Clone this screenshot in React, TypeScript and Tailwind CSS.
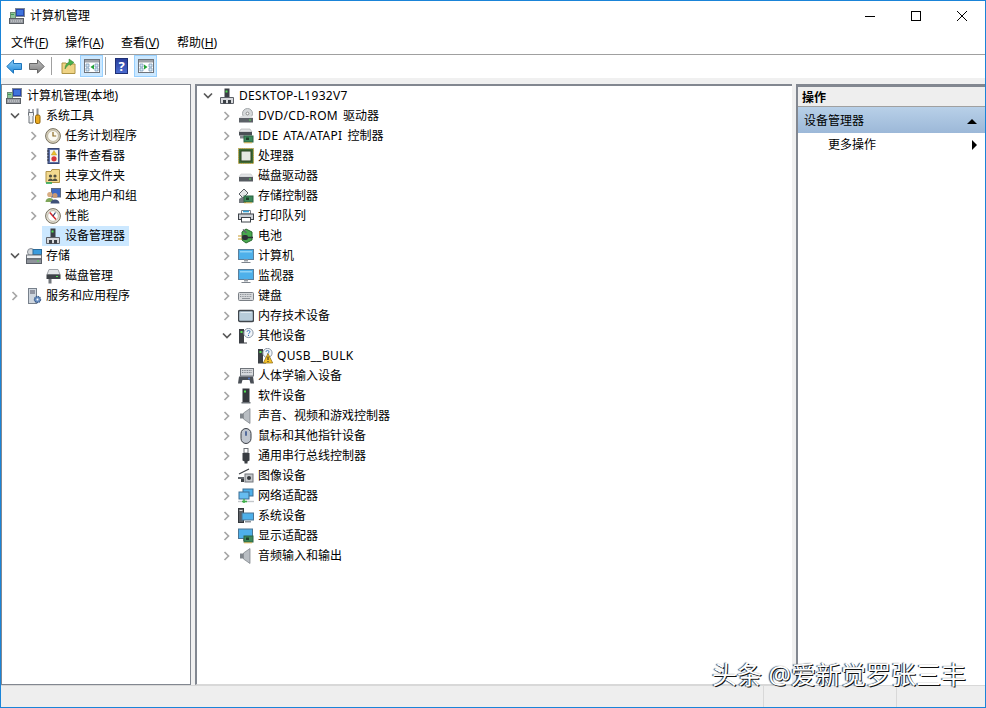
import type { ReactNode } from "react";

const FONT = "font-['Noto_Sans','Noto_Sans_CJK_SC',sans-serif]";

function Ic({ children, size = 16 }: { children: ReactNode; size?: number }) {
  return (
    <svg width={size} height={size} viewBox="0 0 16 16" className="shrink-0">
      {children}
    </svg>
  );
}

function ChevronRight() {
  return (
    <svg width="8" height="10" viewBox="0 0 8 10" className="shrink-0">
      <path d="M1.5 1l4 4-4 4" fill="none" stroke="#a6a6a6" strokeWidth="1.7" />
    </svg>
  );
}

function ChevronDown() {
  return (
    <svg width="10" height="8" viewBox="0 0 10 8" className="shrink-0">
      <path d="M1 1.5l4 4 4-4" fill="none" stroke="#595959" strokeWidth="1.7" />
    </svg>
  );
}

const Computer = () => (
  <Ic>
    <rect x="6.5" y="0.5" width="9" height="8" fill="#2747ad" stroke="#7d8794" />
    <rect x="8" y="2" width="6" height="5" fill="#3f74dc" />
    <rect x="1.5" y="4.5" width="5" height="6" fill="#8fc39a" stroke="#6b8c72" />
    <rect x="2" y="6" width="3" height="1" fill="#3f9a55" />
    <rect x="0.5" y="10.5" width="14" height="5" fill="#9a9ea4" stroke="#5b5f65" />
    <path d="M2 13h11" stroke="#d8dadd" strokeDasharray="1 1" />
  </Ic>
);

const DevMgr = () => (
  <Ic>
    <rect x="5.5" y="0.5" width="5" height="8.5" fill="#3a3f45" />
    <rect x="6.5" y="2.5" width="2" height="2" fill="#52e052" />
    <path d="M1.5 9.5h13v6h-13z" fill="#d8dadd" stroke="#5d6168" />
    <rect x="4" y="12" width="3" height="3.5" fill="#3a3f45" />
    <rect x="9" y="12" width="3" height="3.5" fill="#3a3f45" />
  </Ic>
);

const Tools = () => (
  <Ic>
    <path d="M3 1v4.5M7 1v4.5" stroke="#8a8f96" strokeWidth="1.5" />
    <path d="M2.5 4.5h5v3L7 8v7H3V8l-.5-.5z" fill="#eef0f2" stroke="#6d7279" />
    <rect x="10.5" y="0.5" width="2" height="7" fill="#8a8f96" />
    <rect x="9.5" y="7" width="4.5" height="8.5" rx="1.5" fill="#e9a91f" stroke="#8f630c" />
  </Ic>
);

const Clock = () => (
  <Ic>
    <circle cx="8" cy="8" r="7.4" fill="#d9d2bd" stroke="#77705f" />
    <circle cx="8" cy="8" r="5.4" fill="#fbfaf3" stroke="#a79f88" strokeWidth="0.6" />
    <path d="M8 4v4h3.2" fill="none" stroke="#8b6a24" strokeWidth="1.2" />
  </Ic>
);

const EventLog = () => (
  <Ic>
    <rect x="3" y="0.5" width="11" height="15" fill="#5b6fa8" stroke="#36456f" />
    <rect x="5" y="2" width="8" height="12" fill="#f4f4f0" />
    <path d="M9 2.5l2.7 4.5H6.3z" fill="#edc02c" stroke="#a88616" strokeWidth="0.4" />
    <circle cx="9" cy="10.8" r="2.6" fill="#d8353a" />
    <path d="M2 3h2M2 6h2M2 9h2M2 12h2" stroke="#30333a" />
  </Ic>
);

const Shared = () => (
  <Ic>
    <path d="M1 3.5h5l1-2h7.5v13H1z" fill="#f2d98e" stroke="#b19448" />
    <circle cx="5.5" cy="8" r="1.6" fill="#4f4f40" />
    <circle cx="10" cy="8" r="1.6" fill="#4f4f40" />
    <path d="M3 13c0-3.4 5-3.4 5 0zM7.5 13c0-3.4 5-3.4 5 0z" fill="#4f4f40" />
    <path d="M1 15h6" stroke="#3fae62" strokeWidth="1.8" />
  </Ic>
);

const Users = () => (
  <Ic>
    <rect x="6.5" y="0.5" width="9" height="8.5" fill="#3b68c4" stroke="#5d6a80" />
    <circle cx="4.8" cy="6.5" r="2.6" fill="#d8ad83" />
    <path d="M0.5 14c0-5.5 8.5-5.5 8.5 0z" fill="#7ea55a" />
    <circle cx="10" cy="7.5" r="2.5" fill="#c99871" />
    <path d="M5.5 15.5c0-5.5 9-5.5 9 0z" fill="#3f5078" />
  </Ic>
);

const Perf = () => (
  <Ic>
    <circle cx="8" cy="8" r="7.4" fill="#e3e0d6" stroke="#77705f" />
    <circle cx="8" cy="8" r="5.3" fill="#fff" stroke="#a79f88" strokeWidth="0.6" />
    <path d="M4.8 4.5L11 11.5" stroke="#d4262c" strokeWidth="1.5" />
    <path d="M10.5 4.5L8 8" stroke="#2c3a66" strokeWidth="1.2" />
  </Ic>
);

const Storage = () => (
  <Ic>
    <circle cx="5" cy="4" r="3.5" fill="#d4d7da" stroke="#888e95" />
    <rect x="7" y="1.5" width="8.5" height="5" fill="#3a9bdc" stroke="#2a6a9a" />
    <rect x="0.5" y="7" width="15" height="3.6" fill="#eceef0" stroke="#6f747b" />
    <rect x="0.5" y="11" width="15" height="4.5" fill="#8f949b" stroke="#5b6068" />
    <rect x="11" y="12.5" width="2" height="1" fill="#52e052" />
  </Ic>
);

const DiskMgmt = () => (
  <Ic>
    <path d="M4 1.5h9l2 5H2z" fill="#e4e6e8" stroke="#a0a4a9" />
    <rect x="1.5" y="6.5" width="14" height="4.5" fill="#3e4247" />
    <rect x="11" y="8" width="2" height="1" fill="#52e052" />
    <rect x="3.5" y="11" width="3" height="4.5" fill="#73777d" />
  </Ic>
);

const Services = () => (
  <Ic>
    <rect x="2.5" y="0.5" width="8" height="15" fill="#cfd6de" stroke="#77808b" />
    <path d="M4 3h5M4 5h5" stroke="#556" />
    <circle cx="11.5" cy="11.5" r="3" fill="#6f95c8" stroke="#3d5f8e" strokeDasharray="1.4 0.6" strokeWidth="1.4" />
    <circle cx="11.5" cy="11.5" r="0.9" fill="#fff" />
  </Ic>
);

const Dvd = () => (
  <Ic>
    <circle cx="9.5" cy="5.5" r="5" fill="#d5d8da" stroke="#a1a5a8" />
    <circle cx="9.5" cy="5.5" r="1.4" fill="#fff" stroke="#888" />
    <path d="M1 10l2-2h11l1 2z" fill="#dcdee0" />
    <rect x="1" y="10" width="14" height="4.5" fill="#5c6167" />
    <rect x="11" y="11.5" width="2" height="1" fill="#52e052" />
  </Ic>
);

const Card = () => (
  <>
    <rect x="6" y="8" width="9" height="6" fill="#3d8a5a" stroke="#2b6342" />
    <rect x="8" y="9.5" width="3" height="2.5" fill="#1f3f2c" />
    <path d="M7 14v1.5M9 14v1.5M11 14v1.5M13 14v1.5" stroke="#e0a92a" />
  </>
);

const Ide = () => (
  <Ic>
    <path d="M3 1h9l2 3H1z" fill="#e2e4e6" stroke="#aaa" strokeWidth="0.6" />
    <rect x="1" y="4" width="13" height="3.5" fill="#4b5056" />
    <rect x="2" y="7.5" width="5" height="3" fill="#82878d" />
    <Card />
  </Ic>
);

const Cpu = () => (
  <Ic>
    <rect x="0.5" y="0.5" width="15" height="15" fill="#3f6b35" stroke="#caa236" strokeDasharray="1 0.8" />
    <rect x="3" y="3" width="10" height="10" fill="#e5e7e2" stroke="#28401f" />
  </Ic>
);

const Disk = () => (
  <Ic>
    <path d="M3 6h10l2 3H1z" fill="#e2e4e6" stroke="#c2c4c6" strokeWidth="0.6" />
    <rect x="1" y="9" width="14" height="4.5" fill="#565b61" />
    <rect x="11" y="10.5" width="2" height="1" fill="#52e052" />
  </Ic>
);

const StorCtl = () => (
  <Ic>
    <path d="M1 6l5-5 4 4-5 5z" fill="#e4e6e8" stroke="#5a5f65" />
    <path d="M1 11l3-2 4 2v4H1z" fill="#75797f" />
    <Card />
  </Ic>
);

const Printer = () => (
  <Ic>
    <path d="M3.5 2.5h9v3.5h-9z" fill="#fff" stroke="#7b8087" />
    <path d="M5 3.5h6" stroke="#35a4d8" strokeWidth="1.6" />
    <rect x="0.5" y="6" width="15" height="5.5" fill="#cdd1d6" stroke="#3d4248" />
    <rect x="3.5" y="9.5" width="9" height="4.5" fill="#fff" stroke="#3d4248" />
  </Ic>
);

const Battery = () => (
  <Ic>
    <path d="M8 1l6 3v8l-6 3-4-3V4z" fill="#48a84e" stroke="#2a6b2f" />
    <path d="M5 1.5l3.5 3.5" stroke="#60666c" strokeWidth="1.5" />
    <rect x="4" y="7" width="6" height="5" rx="2" fill="#2d3137" />
    <path d="M0 8h4M0 11h4" stroke="#c79a2b" strokeWidth="1.2" />
    <path d="M10 9.5h5" stroke="#2d3137" strokeWidth="1.5" />
  </Ic>
);

const Monitor = () => (
  <Ic>
    <rect x="0.5" y="1.5" width="15" height="10" fill="#4eb0ea" stroke="#5b7f9b" />
    <path d="M2 3h12v1.5H2z" fill="#90d3f6" />
    <path d="M6 11.5h4v2H6z" fill="#9aa1a8" />
    <path d="M3.5 14h9v1h-9z" fill="#7e858d" />
  </Ic>
);

const Keyboard = () => (
  <Ic>
    <rect x="0.5" y="4.5" width="15" height="8" rx="1" fill="#d6d8db" stroke="#7a7f85" />
    <path d="M2 6.5h12M2 8.5h12" stroke="#8d9298" strokeDasharray="1 0.7" />
    <path d="M4 10.5h8" stroke="#8d9298" />
  </Ic>
);

const MemTech = () => (
  <Ic>
    <rect x="0.5" y="2.5" width="15" height="11" rx="1.5" fill="#b7ccda" stroke="#40464c" strokeWidth="1.4" />
    <path d="M2.5 4.5h11" stroke="#dfeaf1" />
  </Ic>
);

const Tower = () => (
  <>
    <rect x="1" y="1" width="5" height="14" fill="#3b3f44" />
    <rect x="2.5" y="3" width="2" height="2" fill="#52e052" />
    <path d="M1 15h8" stroke="#3b3f44" />
  </>
);

const Other = () => (
  <Ic>
    <Tower />
    <circle cx="10.5" cy="5" r="4.6" fill="#f1f5fa" stroke="#8d98a6" />
    <path d="M9 3.8c0-1.8 3-1.8 3 0 0 1.2-1.5 1.2-1.5 2.4M10.5 7v1" stroke="#3772b9" strokeWidth="1" fill="none" />
  </Ic>
);

const Warn = () => (
  <Ic>
    <Tower />
    <circle cx="10.5" cy="5" r="4.6" fill="#f1f5fa" stroke="#8d98a6" />
    <path d="M9 3.8c0-1.8 3-1.8 3 0 0 1.2-1.5 1.2-1.5 2.4" stroke="#3772b9" fill="none" />
    <path d="M11 5.5l4.7 9.5H6.3z" fill="#f5c22b" stroke="#8c6a10" strokeWidth="0.7" />
    <path d="M11 8.5v3.5M11 13v1" stroke="#222" strokeWidth="1" />
  </Ic>
);

const Hid = () => (
  <Ic>
    <rect x="2.5" y="0.5" width="13" height="7.5" fill="#d6d8db" stroke="#6f747a" />
    <path d="M4 2.5h10M4 4.5h10" stroke="#80858b" strokeDasharray="1 0.7" />
    <path d="M1 8.5h14l1 7h-3.5l-1-3.5h-7l-1 3.5H0z" fill="#4a4f56" />
    <circle cx="11" cy="10.5" r="0.9" fill="#5577cc" />
  </Ic>
);

const Software = () => (
  <Ic>
    <rect x="4.5" y="0.5" width="7" height="13.5" fill="#33373c" />
    <rect x="6" y="2.5" width="2" height="2" fill="#52e052" />
    <path d="M3.5 14h9v1.5h-9z" fill="#6b7076" />
  </Ic>
);

const Speaker = () => (
  <Ic>
    <rect x="2" y="5.5" width="3.5" height="5" fill="#80868c" />
    <path d="M5.5 5L12 0.5v15L5.5 11z" fill="#b9bec3" stroke="#777c82" strokeWidth="0.7" />
  </Ic>
);

const Mouse = () => (
  <Ic>
    <rect x="3" y="0.5" width="10" height="15" rx="5" fill="#c0c6cf" stroke="#3c4047" />
    <rect x="7" y="3" width="2" height="5" rx="1" fill="#536b9c" />
  </Ic>
);

const Usb = () => (
  <Ic>
    <rect x="6" y="0.5" width="4" height="4.5" fill="#fff" stroke="#6c7076" />
    <path d="M4.5 5h7v7.5l-2 1v2h-3v-2l-2-1z" fill="#393d42" />
  </Ic>
);

const Camera = () => (
  <Ic>
    <path d="M1 6l10-5" stroke="#3b3f44" strokeWidth="1.2" />
    <rect x="7" y="6" width="8" height="8" fill="#c5c8cb" stroke="#70757b" />
    <circle cx="11" cy="10" r="2" fill="#33373c" />
    <rect x="0" y="9" width="6" height="2" fill="#60656b" />
    <rect x="3" y="11" width="3" height="3" fill="#3b3f44" />
  </Ic>
);

const Network = () => (
  <Ic>
    <rect x="5" y="1" width="10" height="7" fill="#4eb0ea" stroke="#3c6f93" />
    <rect x="1" y="4" width="10" height="7" fill="#66bdf0" stroke="#3c6f93" />
    <path d="M0 13.5h16" stroke="#c2c6ca" strokeWidth="1.4" />
    <path d="M6 11v4M4 13.5h5" stroke="#3fb04a" strokeWidth="1.5" />
  </Ic>
);

const SysDev = () => (
  <Ic>
    <rect x="0.5" y="0.5" width="5" height="14" fill="#5b6066" stroke="#33373c" />
    <rect x="1.5" y="2" width="3" height="1" fill="#ddd" />
    <rect x="4" y="5" width="11.5" height="7" fill="#4eb0ea" stroke="#4a7594" />
    <path d="M7 13h6v1.5H7z" fill="#8e949a" />
  </Ic>
);

const Display = () => (
  <Ic>
    <rect x="0.5" y="1" width="14" height="9.5" fill="#4eb0ea" stroke="#4a7594" />
    <path d="M5 11h3v2H5z" fill="#8e949a" />
    <Card />
  </Ic>
);

const Panel = ({ arrow }: { arrow: string }) => (
  <svg width="16" height="14" viewBox="0 0 16 14">
    <rect x="0.5" y="0.5" width="15" height="13" fill="#fff" stroke="#6f747b" />
    <rect x="1" y="1" width="14" height="2.5" fill="#9ea3aa" />
    <path d="M2 5h3v3H2zM2 9h3v3H2zM11 5h3v3h-3zM11 9h3v3h-3z" fill="#d9e8f5" stroke="#6d8fb0" strokeWidth="0.7" />
    <path d={arrow} fill="#22a336" />
  </svg>
);

const Hdr = ({ children, className = "" }: { children: ReactNode; className?: string }) => (
  <div className={`flex h-[22px] items-center justify-center ${className}`}>{children}</div>
);

type Row = {
  label: string;
  icon: ReactNode;
  level: number;
  open?: boolean;
  leaf?: boolean;
  selected?: boolean;
};

const leftRows: Row[] = [
  { label: "系统工具", icon: <Tools />, level: 1, open: true },
  { label: "任务计划程序", icon: <Clock />, level: 2 },
  { label: "事件查看器", icon: <EventLog />, level: 2 },
  { label: "共享文件夹", icon: <Shared />, level: 2 },
  { label: "本地用户和组", icon: <Users />, level: 2 },
  { label: "性能", icon: <Perf />, level: 2 },
  { label: "设备管理器", icon: <DevMgr />, level: 2, leaf: true, selected: true },
  { label: "存储", icon: <Storage />, level: 1, open: true },
  { label: "磁盘管理", icon: <DiskMgmt />, level: 2, leaf: true },
  { label: "服务和应用程序", icon: <Services />, level: 1 },
];

const midRows: Row[] = [
  { label: "DESKTOP-L1932V7", icon: <DevMgr />, level: 0, open: true },
  { label: "DVD/CD-ROM 驱动器", icon: <Dvd />, level: 1 },
  { label: "IDE ATA/ATAPI 控制器", icon: <Ide />, level: 1 },
  { label: "处理器", icon: <Cpu />, level: 1 },
  { label: "磁盘驱动器", icon: <Disk />, level: 1 },
  { label: "存储控制器", icon: <StorCtl />, level: 1 },
  { label: "打印队列", icon: <Printer />, level: 1 },
  { label: "电池", icon: <Battery />, level: 1 },
  { label: "计算机", icon: <Monitor />, level: 1 },
  { label: "监视器", icon: <Monitor />, level: 1 },
  { label: "键盘", icon: <Keyboard />, level: 1 },
  { label: "内存技术设备", icon: <MemTech />, level: 1 },
  { label: "其他设备", icon: <Other />, level: 1, open: true },
  { label: "QUSB__BULK", icon: <Warn />, level: 2, leaf: true },
  { label: "人体学输入设备", icon: <Hid />, level: 1 },
  { label: "软件设备", icon: <Software />, level: 1 },
  { label: "声音、视频和游戏控制器", icon: <Speaker />, level: 1 },
  { label: "鼠标和其他指针设备", icon: <Mouse />, level: 1 },
  { label: "通用串行总线控制器", icon: <Usb />, level: 1 },
  { label: "图像设备", icon: <Camera />, level: 1 },
  { label: "网络适配器", icon: <Network />, level: 1 },
  { label: "系统设备", icon: <SysDev />, level: 1 },
  { label: "显示适配器", icon: <Display />, level: 1 },
  { label: "音频输入和输出", icon: <Speaker />, level: 1 },
];

// latin runs in the reference are set a little wider than Noto Sans
function Label({ text }: { text: string }) {
  const parts = text.split(/([A-Za-z0-9/_ -]{2,})/).filter(Boolean);
  return (
    <>
      {parts.map((part, i) =>
        /^[A-Za-z0-9/_ -]+$/.test(part) ? (
          <span key={i} className="tracking-[0.3px] [word-spacing:1.5px]">{part}</span>
        ) : (
          <span key={i}>{part}</span>
        ),
      )}
    </>
  );
}

function TreeRow({ row, indent }: { row: Row; indent: number }) {
  return (
    <div className="flex h-5 items-center" style={{ paddingLeft: row.level * 19 + indent }}>
      <span className="mr-px flex w-[15px] shrink-0 items-center justify-center">
        {row.leaf ? null : row.open ? <ChevronDown /> : <ChevronRight />}
      </span>
      <span className={`flex h-5 items-center ${row.selected ? "bg-[#cce8ff]" : ""}`}>
        <span className="flex w-[23px] pl-[3px]">{row.icon}</span>
        <span className="pr-1 text-[12px] whitespace-nowrap text-black">
          <Label text={row.label} />
        </span>
      </span>
    </div>
  );
}

function Menu({ label, hot, width }: { label: string; hot: string; width: string }) {
  return (
    <span className={width}>
      {label}(<span className="underline">{hot}</span>)
    </span>
  );
}

export default function App() {
  return (
    <div className={`relative flex h-[708px] w-[986px] flex-col overflow-hidden border border-[#1a84d8] bg-white ${FONT}`}>
      <div className="flex h-[30px] shrink-0 items-center">
        <span className="mr-[5px] ml-2"><Computer /></span>
        <span className="text-[12px] text-black">计算机管理</span>
        <div className="ml-auto flex items-center">
          <svg width="46" height="30" viewBox="0 0 46 30"><path d="M18 15.5h10" stroke="#000" /></svg>
          <svg width="46" height="30" viewBox="0 0 46 30"><rect x="18.5" y="10.5" width="9" height="9" fill="none" stroke="#000" /></svg>
          <svg width="46" height="30" viewBox="0 0 46 30"><path d="M18 10l10 10M28 10L18 20" stroke="#000" /></svg>
        </div>
      </div>

      <div className="flex h-6 shrink-0 items-center border-b border-[#a0a0a0] pl-[10px] text-[12px] text-black">
        <Menu label="文件" hot="F" width="w-[54px]" />
        <Menu label="操作" hot="A" width="w-[56px]" />
        <Menu label="查看" hot="V" width="w-[56px]" />
        <Menu label="帮助" hot="H" width="w-[56px]" />
      </div>

      <div className="flex h-[23px] shrink-0 items-center bg-white pb-px pl-[5px]">
        <Hdr className="w-4">
          <svg width="16" height="15" viewBox="0 0 16 15" className="shrink-0">
            <defs>
              <linearGradient id="back" x1="0" y1="0" x2="0" y2="1">
                <stop offset="0" stopColor="#8fd0f8" />
                <stop offset="1" stopColor="#1e86d8" />
              </linearGradient>
            </defs>
            <path d="M7.5 0.8L0.8 7.5l6.7 6.7V10.5h8v-6h-8z" fill="url(#back)" stroke="#1c74bb" />
          </svg>
        </Hdr>
        <Hdr className="ml-[7px] w-4">
          <svg width="16" height="15" viewBox="0 0 16 15" className="shrink-0">
            <defs>
              <linearGradient id="fwd" x1="0" y1="0" x2="0" y2="1">
                <stop offset="0" stopColor="#c2c2c2" />
                <stop offset="1" stopColor="#7e7e7e" />
              </linearGradient>
            </defs>
            <path d="M8.5 0.8l6.7 6.7-6.7 6.7V10.5h-8v-6h8z" fill="url(#fwd)" stroke="#666" />
          </svg>
        </Hdr>
        <span className="ml-[6px] h-[18px] w-px bg-[#a0a0a0]" />
        <Hdr className="ml-[9px] w-[14px]">
          <svg width="15" height="16" viewBox="0 0 15 16" className="shrink-0">
            <path d="M1 5h4l1 1h8v9.5H1z" fill="#efd384" stroke="#ae9445" />
            <path d="M4 11c0-4 2-6 4-7V1l5 3.5-4 3V6c-2 1-3 2-5 5z" fill="#49b14b" stroke="#2e7d30" strokeWidth="0.5" />
          </svg>
        </Hdr>
        <Hdr className="ml-[5px] w-[23px] border border-[#99d1ff] bg-[#cce8ff]">
          <Panel arrow="M10 5.5v5L6.5 8z" />
        </Hdr>
        <span className="ml-[2px] h-[18px] w-px bg-[#a0a0a0]" />
        <Hdr className="ml-[9px] w-[13px]">
          <span className="flex h-4 w-[13px] items-center justify-center border border-[#1d2f74] bg-gradient-to-b from-[#2a3f9c] to-[#4a6bd0] text-[13px] leading-none font-bold text-white">?</span>
        </Hdr>
        <Hdr className="ml-[6px] w-[23px] border border-[#99d1ff] bg-[#cce8ff]">
          <Panel arrow="M6 5.5v5L9.5 8z" />
        </Hdr>
      </div>

      <div className="flex min-h-0 flex-1 gap-1 bg-[#f0f0f0] pt-[6px]">
        <div className="h-[601px] w-[190px] shrink-0 border border-[#828790] bg-white pt-px">
          <div className="flex h-5 items-center pl-[1px]">
            <span className="flex w-[24px] pl-[3px]"><Computer /></span>
            <span className="text-[12px] whitespace-nowrap text-black">计算机管理(本地)</span>
          </div>
          {leftRows.map((row) => (
            <TreeRow key={row.label} row={row} indent={-14} />
          ))}
        </div>
        <div className="h-[601px] w-[597px] shrink-0 border-t-2 border-b border-l-2 border-[#828790] border-b-[#d8d8d8] bg-white">
          {midRows.map((row) => (
            <TreeRow key={row.label} row={row} indent={3} />
          ))}
        </div>
        <div className="h-[601px] w-[189px] shrink-0 border-t-[3px] border-l-2 border-[#828790] bg-white">
          <div className="flex h-5 items-center border-b border-[#a0a0a0] bg-[#eeeeee] pt-[2px] pl-[4px] text-[12px] font-bold text-black">操作</div>
          <div className="flex h-[26px] items-center justify-between bg-gradient-to-b from-[#b8d0e8] to-[#9cb8d8] pt-[2px] pr-[8px] pl-[6px] text-[12px] text-black">
            <span>设备管理器</span>
            <svg width="10" height="5" viewBox="0 0 10 5"><path d="M5 0l5 5H0z" fill="#000" /></svg>
          </div>
          <div className="flex h-[24px] items-center justify-between pr-[8px] pl-[30px] text-[12px] text-black">
            <span>更多操作</span>
            <svg width="5" height="10" viewBox="0 0 5 10"><path d="M0 0l5 5-5 5z" fill="#000" /></svg>
          </div>
        </div>
      </div>

      <div className="flex h-[22px] shrink-0 border-t border-[#d8d8d8] bg-[#eeeeee]">
        <span className="w-[763px] border-r border-[#d8d8d8]" />
        <span className="w-[133px] border-r border-[#d8d8d8]" />
      </div>

      <div className="absolute top-[657px] left-[711px] text-[25px] leading-[32px] whitespace-nowrap text-white [text-shadow:1px_1px_0_#111,-1px_0_1px_#333]">
        头条 @爱新觉罗张三丰
      </div>
    </div>
  );
}
